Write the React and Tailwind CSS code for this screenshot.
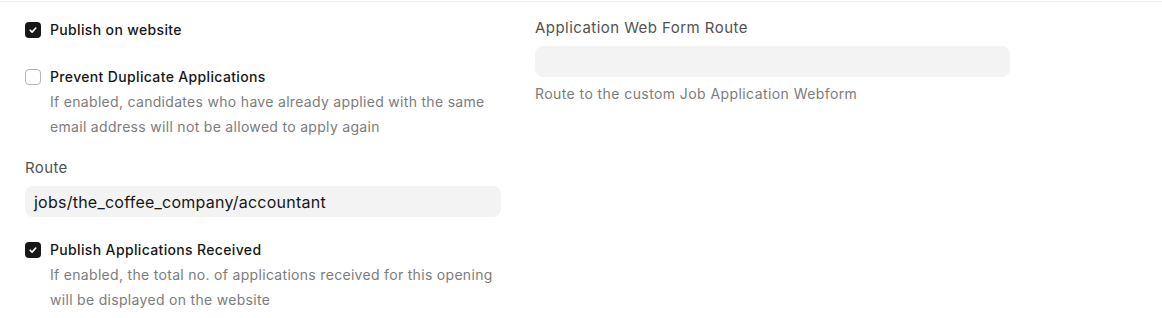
import React from "react";

const Check = ({ checked }) =>
  checked ? (
    <span className="mt-[2px] flex h-4 w-4 shrink-0 items-center justify-center rounded-[4px] bg-[#171717]">
      <svg width="10" height="10" viewBox="0 0 10 10" fill="none">
        <path d="M2.2 5.2 4.1 7.1 7.8 3" stroke="#fff" strokeWidth="1.6" strokeLinecap="round" strokeLinejoin="round" />
      </svg>
    </span>
  ) : (
    <span className="mt-[2px] h-4 w-4 shrink-0 rounded-[4px] border border-[#b5b5b5] bg-white" />
  );

const CheckField = ({ checked, label, description }) => (
  <div className="flex gap-[9px]">
    <Check checked={checked} />
    <div>
      <div className="text-[14px] font-medium leading-[20px] tracking-[0.025em] text-[#171717]">{label}</div>
      {description && (
        <div className="mt-[2px] text-[14px] leading-[25px] tracking-[0.022em] text-[#7c7c7c]">
          {description}
        </div>
      )}
    </div>
  </div>
);

const App = () => {
  return (
    <div className="min-h-[318px] bg-white pt-px font-['Inter',sans-serif]">
      <div className="flex gap-[34px] border-t border-[#ededed] pl-[25px]">
        {/* left column */}
        <div className="flex w-[476px] flex-col pt-[18px]">
          <CheckField checked label="Publish on website" />
          <div className="mt-[27px]">
            <CheckField
              label="Prevent Duplicate Applications"
              description={
                <>
                  If enabled, candidates who have already applied with the same
                  <br />
                  email address will not be allowed to apply again
                </>
              }
            />
          </div>
          <div className="mt-[19px]">
            <div className="text-[15px] leading-[20px] tracking-[0.025em] text-[#525252]">Route</div>
            <div className="mt-[8px] flex h-[31px] items-center rounded-[8px] bg-[#f3f3f3] px-[9px] text-[16px] tracking-[0.015em] text-[#171717]">
              jobs/the_coffee_company/accountant
            </div>
          </div>
          <div className="mt-[23px]">
            <CheckField
              checked
              label="Publish Applications Received"
              description={
                <>
                  If enabled, the total no. of applications received for this opening
                  <br />
                  will be displayed on the website
                </>
              }
            />
          </div>
        </div>

        {/* right column */}
        <div className="flex w-[475px] flex-col pt-[16px]">
          <div className="text-[15px] leading-[20px] tracking-[0.03em] text-[#525252]">
            Application Web Form Route
          </div>
          <div className="mt-[8px] h-[31px] rounded-[8px] bg-[#f3f3f3]" />
          <div className="mt-[7px] text-[14px] leading-[20px] tracking-[0.03em] text-[#7c7c7c]">
            Route to the custom Job Application Webform
          </div>
        </div>
      </div>
    </div>
  );
};

export default App;
